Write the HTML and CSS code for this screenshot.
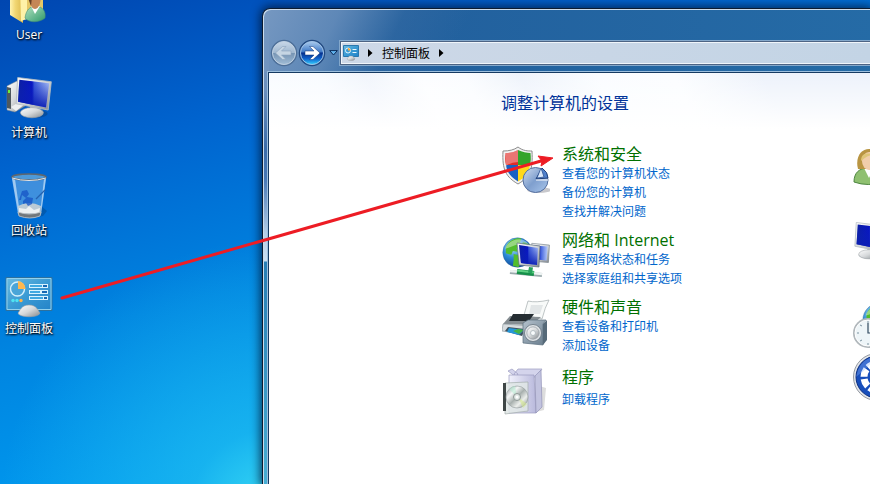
FILE: index.html
```html
<!DOCTYPE html>
<html lang="zh-CN">
<head>
<meta charset="utf-8">
<meta name="viewport" content="width=device-width, initial-scale=1">
<title>控制面板</title>
<link rel="stylesheet" href="styles.css">
</head>
<body>
<svg class="defs" width="0" height="0" aria-hidden="true">
  <defs>
    <linearGradient id="silver" x1="0" y1="0" x2="1" y2="1"><stop offset="0" stop-color="#fff"/><stop offset=".5" stop-color="#d5d8da"/><stop offset="1" stop-color="#858a8e"/></linearGradient>
    <linearGradient id="screen" x1="0" y1="0" x2="1" y2="0"><stop offset="0" stop-color="#0c1fa0"/><stop offset=".45" stop-color="#0713c4"/><stop offset=".52" stop-color="#3f5fdc"/><stop offset="1" stop-color="#b5cbfa"/></linearGradient>
    <linearGradient id="fade" x1="0" y1="0" x2="0" y2="1"><stop offset="0" stop-color="#1029b8" stop-opacity="0"/><stop offset="1" stop-color="#0a1cb4" stop-opacity=".95"/></linearGradient>
    <linearGradient id="panel" x1="0" y1="0" x2="1" y2="1"><stop offset="0" stop-color="#6cbbe0"/><stop offset=".5" stop-color="#3b9bd4"/><stop offset="1" stop-color="#2383c8"/></linearGradient>
    <linearGradient id="folder" x1="0" y1="0" x2="1" y2="0"><stop offset="0" stop-color="#fff3b0"/><stop offset=".4" stop-color="#f2d774"/><stop offset="1" stop-color="#dcb94c"/></linearGradient>
    <linearGradient id="green" x1="0" y1="0" x2="1" y2="1"><stop offset="0" stop-color="#b4e2c0"/><stop offset="1" stop-color="#2f9a6b"/></linearGradient>
    <linearGradient id="pie" x1="0" y1="0" x2="1" y2="1"><stop offset="0" stop-color="#d2def0"/><stop offset=".5" stop-color="#7f9fce"/><stop offset="1" stop-color="#a9c6ec"/></linearGradient>
    <linearGradient id="box" x1="0" y1="0" x2="1" y2="0"><stop offset="0" stop-color="#f1f1fc"/><stop offset="1" stop-color="#b9b9dc"/></linearGradient>
    <linearGradient id="speaker" x1="0" y1="0" x2="1" y2="1"><stop offset="0" stop-color="#b5c2cd"/><stop offset="1" stop-color="#667a8b"/></linearGradient>
    <linearGradient id="disc" x1="0" y1="0" x2="1" y2="1"><stop offset="0" stop-color="#8d9396"/><stop offset=".3" stop-color="#f4f6f6"/><stop offset=".5" stop-color="#a8b0ae"/><stop offset=".7" stop-color="#ecefec"/><stop offset="1" stop-color="#7a8284"/></linearGradient>
    <radialGradient id="globe" cx=".35" cy=".3" r=".75"><stop offset="0" stop-color="#b7e6fb"/><stop offset=".5" stop-color="#2c8bd6"/><stop offset="1" stop-color="#0a3f96"/></radialGradient>
    <linearGradient id="forward" x1="0" y1="0" x2="0" y2="1"><stop offset="0" stop-color="#a9cbee"/><stop offset=".45" stop-color="#3f79c6"/><stop offset=".5" stop-color="#06308c"/><stop offset=".75" stop-color="#0f63cc"/><stop offset="1" stop-color="#35d1ff"/></linearGradient>
    <linearGradient id="back" x1="0" y1="0" x2="0" y2="1"><stop offset="0" stop-color="#c9d8e8"/><stop offset=".48" stop-color="#a0b8d0"/><stop offset=".52" stop-color="#7795b4"/><stop offset="1" stop-color="#a0bcd6"/></linearGradient>
    <symbol id="control-panel" viewBox="0 0 48 48">
      <path d="M1 7.500h46v33H1z" fill="url(#panel)" stroke="#2c719f"/>
      <path d="M2 8.500h44v31H2z" fill="none" stroke="#92d1ed"/>
      <circle cx="12.500" cy="19" r="7" fill="#4aa5d8" stroke="#d5f1fc" stroke-width="1.400"/>
      <path d="M13 19v-8a8 8 0 0 1 7.500 8z" fill="#ffb84e"/>
      <path d="M24 14h19v4H24zM24 20h19v4H24zM24 26h19v4H24z" fill="#d8f3ff"/>
      <path d="M25 15h12v2H25zM25 21h10v2H25zM25 27h13v2H25z" fill="#3fa9e2"/>
      <path d="M38 15h4v2h-4zM37 21h5v2h-5zM39 27h3v2h-3z" fill="#1668b4"/>
      <circle cx="8" cy="30.500" r="1.700" fill="#4fe4f2"/><circle cx="12" cy="30.500" r="1.700" fill="#4fe4f2"/><circle cx="16" cy="30.500" r="1.700" fill="#ffb347"/>
      <path d="M13 43c2-2 3-8 11-8s9 6 11 8c-1 5-21 5-22 0z" fill="url(#silver)" stroke="#9a9fa3" stroke-width=".6"/>
    </symbol>
    <symbol id="monitor" viewBox="0 0 34 40">
      <ellipse cx="17" cy="35" rx="13" ry="4" fill="#123" opacity=".25"/>
      <path d="M14 26l7 1-1 6h-8z" fill="#aeb4b8"/>
      <ellipse cx="15" cy="34" rx="11" ry="4.800" fill="url(#silver)" stroke="#a3a8ac" stroke-width=".6"/>
      <path d="M1.500.500l32 4-3 27-30.500-6z" fill="url(#silver)" stroke="#b4bcc2" stroke-width=".8"/>
      <path d="M3 2.500l28.500 3.500-3 23-26.700-5.500z" fill="url(#screen)"/><path d="M3 2.500l28.500 3.500-3 23-26.700-5.500z" fill="url(#fade)"/>
    </symbol>
    <symbol id="earth" viewBox="0 0 40 40">
      <circle cx="20" cy="20" r="19" fill="url(#globe)" stroke="#2b6799" stroke-width=".5"/>
      <path d="M5 13C10 3 18 1 25 2l-2 5 4 3-8 4 1 5-6-1-2 5-7-2zM15 22l9 2 4 6-7 9-7-2 1-7z" fill="#52bd2d"/>
      <path d="M27 6l8 3 3 8-8 3-5-7z" fill="#2fa43a"/>
      <path d="M4 15C8 3 27-2 34 9 22 6 14 13 4 15z" fill="#fff" opacity=".4"/>
    </symbol>
  </defs>
</svg>

<ul class="desktop">
  <li><a class="shortcut" href="#user">
    <svg viewBox="0 0 48 48" aria-hidden="true"><path d="M18 4l20-2v38l-18 3z" fill="#e6c766"/><path d="M5 1l13 5v41L5 39z" fill="url(#folder)"/><path d="M15 8l7-1v36l-6 2z" fill="#fff1a8"/><path d="M20 42c1-8 5-12 11-12 7 1 10 5 9 12-6 5-16 5-20 0z" fill="url(#green)" stroke="#458e73" stroke-width=".6"/><path d="M26 30l4 8 5-8z" fill="#fff"/><path d="M24 19c0-8 12-8 12 0 0 7-2 14-6 14s-6-7-6-14z" fill="#c48656"/><path d="M23 22c-1-8 4-11 9-9l-5 8-1 9z" fill="#684126"/></svg>
    <span>User</span></a></li>
  <li><a class="shortcut" href="#computer">
    <svg viewBox="0 0 48 48" aria-hidden="true"><path d="M2 12l10-5 8 2v23l-10 6-8-2z" fill="url(#silver)" stroke="#80868c" stroke-width=".5"/><path d="M2 13l4 1v21l-4-1z" fill="#4e585e"/><path d="M3 16h2v3H3z" fill="#69f03c"/><path d="M6 33l8-5 6 2-9 7z" fill="#eef0f1"/><use href="#monitor" x="11" y="3" width="36" height="42"/></svg>
    <span>计算机</span></a></li>
  <li><a class="shortcut" href="#recycle">
    <svg viewBox="0 0 48 48" aria-hidden="true"><path d="M36 34l6 5-4 5-6 1z" fill="#024" opacity=".25"/><path d="M7 5h34l-5 38q-12 5-22 0z" fill="#9ccbf0" opacity=".4"/><path d="M10 7l5 35h-2L7 7zM39 7l-4 35h1l5-35z" fill="#e2f2ff" opacity=".6"/><path d="M13 34q11-6 23 0l-1 8H14z" fill="#c9d0d4" opacity=".9"/><path d="M14 36l7 1 3-3 5 4 6-2-1 5H14z" fill="#edf0f1"/><path d="M13 40q11 4 23 0l-1 4q-10 4-21 0z" fill="#72777b" stroke="#c5c9cc" stroke-width=".8"/><path d="M17 19l5-1 2 4-3 4-4-3-1 5h-2zM18 29l4-4 6 1-1 6-4 2-2-3-3 1z" fill="#1553c4" opacity=".75"/><path d="M31 27l9-9" stroke="#2462b0" stroke-width="1.200"/><ellipse cx="24" cy="5" rx="17" ry="3" fill="#4f9ad8" stroke="#5f666d" stroke-width="1.600"/><path d="M7 6q17 5 34 0" fill="none" stroke="#e3e7ea"/></svg>
    <span>回收站</span></a></li>
  <li><a class="shortcut" href="#panel">
    <svg viewBox="0 0 48 48" aria-hidden="true"><use href="#control-panel" width="48" height="48"/></svg>
    <span>控制面板</span></a></li>
</ul>

<section class="window" aria-label="控制面板">
  <header class="toolbar">
    <div class="history">
      <button type="button" aria-label="后退"><svg viewBox="0 0 28 28"><circle cx="14" cy="14" r="12.500" fill="none" stroke="#4d6f98" stroke-width="1.500"/><circle cx="14" cy="14" r="11.500" fill="url(#back)" stroke="#c0d0e0"/><path d="M5.500 14l7-6.500H16L11.500 12H21v4h-9.500l4.500 4.500h-3.500z" fill="#c6d5e3" stroke="#8ba3bc" stroke-width=".6"/></svg></button>
      <button type="button" aria-label="前进"><svg viewBox="0 0 28 28"><circle cx="14" cy="14" r="12.500" fill="none" stroke="#234a81" stroke-width="1.500"/><circle cx="14" cy="14" r="11.500" fill="url(#forward)" stroke="#9fc2e6"/><path d="M22 14l-7 6.500h-3.500L16 16H7v-4h9l-4.500-4.500H15z" fill="#fff" stroke="#0d3479" stroke-width=".5"/></svg></button>
      <button class="recent" type="button" aria-label="最近的页面"><svg viewBox="0 0 9 6"><path d="M.7.600h7.600L4.500 5z" fill="#61b4ef" stroke="#0b2a59"/></svg></button>
    </div>
    <nav class="address" aria-label="地址">
      <svg class="place" viewBox="0 0 16 16" aria-hidden="true"><path d="M.5.500h15v11H.5z" fill="url(#panel)" stroke="#2a78ae"/><circle cx="5" cy="5.500" r="2.500" fill="#3b9bd4" stroke="#e2f5fd"/><path d="M5 5.500V3a2.500 2.500 0 0 1 2.500 2.500z" fill="#ffab3a"/><path d="M9.500 4.500h4M9.500 7.500h4" stroke="#e8f8ff" stroke-width="1.200"/><path d="M4 14c1-1 1-3 4-3s3 2 4 3c-1 2-7 2-8 0z" fill="url(#silver)" stroke="#8f969c" stroke-width=".4"/></svg>
      <svg class="caret" viewBox="0 0 5 8" aria-hidden="true"><path d="M0 0l4.500 4L0 8z"/></svg>
      <a href="#panel">控制面板</a>
      <svg class="caret" viewBox="0 0 5 8" aria-hidden="true"><path d="M0 0l4.500 4L0 8z"/></svg>
    </nav>
  </header>
  <main class="pane">
    <h1>调整计算机的设置</h1>
    <div class="columns">
      <div class="categories">
        <section class="category">
          <svg viewBox="0 0 48 48" aria-hidden="true"><ellipse cx="37" cy="45" rx="12" ry="3" fill="#223" opacity=".25"/><path d="M16 2c5 4 10 4 14 4 1 19-2 26-14 33C4 32 0 25 1 6c6 0 11-1 15-4z" fill="#f2f2f2" stroke="#8c8c8c"/><path d="M16 5v15H4C3 17 3 13 3.500 8c5 0 9-1 12.500-3z" fill="#e12d28"/><path d="M16 5c4 2 9 3 12.500 3 .5 5 .5 8-.5 12H16z" fill="#34a42b"/><path d="M4 20h12v16.500C9 32 5 28 4 20z" fill="#1760c4"/><path d="M16 20h12c-1 8-4 12-12 16.500z" fill="#ffd91b"/><path d="M3.500 8c5 0 9-1 12.500-3v12Q9 17 4 21z" fill="#fff" opacity=".35"/><circle cx="33.500" cy="35" r="12.500" fill="url(#pie)" stroke="#546f9f"/><path d="M34 34l6-11q6 4 6 10z" fill="#4f80cb" stroke="#203f78"/><path d="M35 33l4-10 3 9z" fill="#d9e8fb" stroke="#274a8b" stroke-width=".7"/><path d="M34 35h12" stroke="#fff" stroke-width="1.200"/></svg>
          <div><h2><a href="#security">系统和安全</a></h2><a href="#status">查看您的计算机状态</a><a href="#backup">备份您的计算机</a><a href="#fix">查找并解决问题</a></div>
        </section>
        <section class="category">
          <svg viewBox="0 0 48 48" aria-hidden="true"><use href="#earth" x="0" y="6" width="31" height="31"/><g transform="translate(29 12) scale(.52 .6)"><path d="M1.500.500l34 3-2 29-30-2z" fill="url(#silver)" stroke="#62717c"/><path d="M4 4l28 2-2 23-24-2z" fill="url(#screen)"/></g><path d="M15 12l23 3-1 21-20-2z" fill="url(#silver)" stroke="#62717c" stroke-width=".7"/><path d="M17 14l19 3-1 17-16-2z" fill="url(#screen)"/><path d="M17 14l19 3-1 17-16-2z" fill="url(#fade)"/><path d="M8 41l32 3" stroke="#9ba9ac" stroke-width="4"/><path d="M8 40l32 3" stroke="#edf3f2" stroke-width="2.500"/><path d="M15 40.500l17 2" stroke="#16904a" stroke-width="5"/><path d="M15 39.500l17 2" stroke="#5ed083" stroke-width="2"/><path d="M27 36l4 .5-1 6-4-1z" fill="#27a15c"/></svg>
          <div><h2><a href="#network">网络和 Internet</a></h2><a href="#tasks">查看网络状态和任务</a><a href="#homegroup">选择家庭组和共享选项</a></div>
        </section>
        <section class="category">
          <svg viewBox="0 0 48 48" aria-hidden="true"><path d="M22 17L26 3q8 2 21-1-4 7-7 19z" fill="#f8faf9" stroke="#a4acad" stroke-width=".7"/><path d="M29 7h12l-3 9H27z" fill="#e2e6e7"/><path d="M8 18l31 1-9 8-29-1z" fill="#858d92"/><path d="M11 16h21l-5 7H7z" fill="#252d32"/><path d="M1 26l29 2-2 9L0 33z" fill="#d7dcdf" stroke="#8f9ba1" stroke-width=".7"/><path d="M6 29l17 2-3 7-17-5z" fill="#41535f"/><path d="M7 30l15 2-5 5-12-3z" fill="#2697d8"/><path d="M11 33l5-2 6 1-5 4z" fill="#45b445"/><path d="M21 25l5-3h18l-3 4v21l-20-2z" fill="url(#speaker)" stroke="#596d7d" stroke-width=".7"/><path d="M41 26l4-4v20l-4 5z" fill="#566a79"/><circle cx="31" cy="35" r="8.500" fill="#e1e5e8" stroke="#63717c" stroke-width=".8"/><circle cx="31" cy="35" r="6.200" fill="url(#silver)" stroke="#909aa1" stroke-width=".7"/><circle cx="31" cy="35" r="2.500" fill="#f8fbfc" stroke="#a1acb2" stroke-width=".7"/></svg>
          <div><h2><a href="#hardware">硬件和声音</a></h2><a href="#printers">查看设备和打印机</a><a href="#add">添加设备</a></div>
        </section>
        <section class="category single">
          <svg viewBox="0 0 48 48" aria-hidden="true"><path d="M34 17l10 3-2 22-12 3z" fill="#555" opacity=".2"/><path d="M6 3l4-2 6 5-2 3zM12 6l4-5h24l-6 8H14z" fill="#d4d4ec" stroke="#9c9cc0" stroke-width=".7"/><path d="M7 7h25l2 38H7z" fill="url(#box)" stroke="#9c9cc0" stroke-width=".7"/><path d="M33 8l6-6 1 37-6 6z" fill="#c2c3df" stroke="#9292b8" stroke-width=".7"/><path d="M3 15l23-1v29L3 46z" fill="#dfe6e5" fill-opacity=".85" stroke="#a4adac" stroke-width=".7"/><path d="M1 15h3v28H1z" fill="#3f4646"/><circle cx="15" cy="29" r="11" fill="url(#disc)" stroke="#90999a" stroke-width=".6"/><path d="M15 29L7 21q3-3 6-3z" fill="#b6f0d3" opacity=".5"/><path d="M16 29l9 7-4 4z" fill="#d5e991" opacity=".6"/><circle cx="15" cy="29" r="3.500" fill="#dce3e1" stroke="#8e9795"/><circle cx="15" cy="29" r="1.500" fill="#fff"/></svg>
          <div><h2><a href="#programs">程序</a></h2><a href="#uninstall">卸载程序</a></div>
        </section>
      </div>
      <div class="more">
        <a href="#accounts" aria-label="用户帐户"><svg viewBox="0 0 48 48"><path d="M1 37c0-9 5-14 14-14s15 5 15 14q-15 5-29 0z" fill="#8fc070" stroke="#4d8540"/><path d="M11 23l5 10 5-10z" fill="#fff"/><path d="M5 24C2 12 8 4 16 4s13 7 10 20z" fill="#b99542"/><ellipse cx="16" cy="16" rx="7" ry="9" fill="#f1ceab"/><path d="M8 16c0-8 6-9 14-6-6 0-9 2-14 6z" fill="#dfc578"/></svg></a>
        <a href="#appearance" aria-label="外观"><svg viewBox="0 0 48 48"><use href="#monitor" x="1" y="1" width="34" height="38"/></svg></a>
        <a href="#clock" aria-label="时钟"><svg viewBox="0 0 48 48"><use href="#earth" x="9" y="1" width="36" height="36"/><circle cx="15" cy="32" r="15" fill="#b0b7bb"/><circle cx="15" cy="32" r="13" fill="#eef5f8" stroke="#fff"/><path d="M15 22v10h7" fill="none" stroke="#334b60" stroke-width="1.200"/><path d="M15 20v2M15 42v2M4 32h2M7 24l2 1M7 40l2-1" stroke="#7b929f"/></svg></a>
        <a href="#ease" aria-label="轻松访问"><svg viewBox="0 0 48 48"><circle cx="24" cy="24" r="23.500" fill="#e4e7eb" stroke="#9499a1"/><circle cx="24" cy="24" r="21" fill="#174ebb" stroke="#0a2d80"/><circle cx="24" cy="24" r="13" fill="none" stroke="#fff" stroke-width="7" stroke-dasharray="8 2.210"/><path d="M3 24q3-18 20-21-6 11-20 21z" fill="#8db8ff" opacity=".35"/></svg></a>
      </div>
    </div>
  </main>
</section>

<svg class="pointer" width="500" height="160" viewBox="0 0 500 160" aria-hidden="true"><path d="M7 150L486 13" stroke="#ed1c24" stroke-width="3" stroke-linecap="round"/><path d="M483 8l15 2-12 8 1-5z" fill="#ed1c24" stroke="#ed1c24"/></svg>
</body>
</html>
```

FILE: styles.css
```css
* { box-sizing: border-box; }
body {
  position: relative;
  min-height: 100vh;
  margin: 0;
  overflow: hidden;
  color: #000;
  font: 12px/19px "Open Sans", "Noto Sans CJK SC", sans-serif;
  background:
    radial-gradient(circle at 270px 510px, #38d8f4 0, rgba(32, 190, 240, .7) 80px, rgba(16, 165, 235, 0) 270px),
    linear-gradient(165deg, #0046b0 0, #0064cf 170px, #0084e0 340px, #0098ee 500px, #0aa4f0 100%);
}
a { color: inherit; text-decoration: none; }
svg { display: block; }
button { padding: 0; border: 0; background: none; }
h1, h2 { margin: 0; font-size: 16px; font-weight: 400; }
.defs { position: absolute; }

.desktop {
  display: flex;
  flex-direction: column;
  gap: 30px;
  width: 58px;
  margin: -24px 0 0;
  padding: 0;
  list-style: none;
}
.shortcut {
  display: flex;
  flex-direction: column;
  align-items: center;
  gap: 2px;
  color: #fff;
  line-height: 18px;
  text-shadow: 1px 1px 2px #000, 0 1px 2px #001a3c;
  white-space: nowrap;
}
.shortcut svg { width: 48px; height: 48px; }

.window {
  position: absolute;
  inset: 8px 0 0 262px;
  display: flex;
  flex-direction: column;
  padding-left: 5px;
  overflow: hidden;
  border: solid #0c1c30;
  border-width: 1px 0 0 1px;
  border-radius: 8px 0 0 0;
  box-shadow: inset 1px 1px 0 #cbdcec, 0 0 10px 2px rgba(0, 20, 50, .75);
  background:
    linear-gradient(115deg, #7698c1 0, rgba(105, 143, 188, .85) 70px, rgba(60, 110, 165, .4) 130px, rgba(36, 100, 160, 0) 190px) 0 0 / 100% 63px no-repeat,
    linear-gradient(90deg, #215d9b, #256ba6) 6px 0 / 100% 63px no-repeat,
    linear-gradient(#7597c0 0, #6b90be 80px, #3a6caa 140px, #4778b6 170px, #b5cee7 225px, #cbdff2 252px, #277eb5 253px, #48aed3 100%);
}
.toolbar { display: flex; align-items: center; padding: 30px 0 5px; }
.history { display: flex; align-items: center; width: 73px; padding-left: 2px; }
.history svg { width: 28px; height: 28px; }
.history .recent { padding-left: 3px; }
.history .recent svg { width: 9px; height: 6px; }
.address {
  display: flex;
  flex: 1;
  align-items: center;
  gap: 9px;
  height: 22px;
  padding: 0 1px;
  border: solid #f0f5fa;
  border-width: 1px 0 1px 1px;
  box-shadow: 0 0 0 1px #4d6484, 0 0 0 2px #84a8cb;
  background: linear-gradient(90deg, #cdd8e7, #c3d4e5);
}
.place { width: 16px; height: 16px; }
.caret { width: 5px; height: 8px; }

.pane {
  flex: 1;
  padding: 20px 0 0 233px;
  overflow: hidden;
  border: solid #153a62;
  border-width: 1px 0 0 1px;
  box-shadow: 0 0 0 1px #9dbfdd;
  background:
    linear-gradient(rgba(255, 255, 255, 0), #fff 56px),
    linear-gradient(65deg, #edf3fb 0, #fafcff 130px, #f8fbff 220px, #f1f5fc 260px, #fcfdff 310px, #fafcff 350px, #eef3fb 400px, #fafcff 470px, #fbfdff 540px, #edf2fb 620px);
}
h1 { margin-left: -1px; color: #003399; line-height: 21px; }
.columns { display: grid; grid-template-columns: 351px 1fr; margin-top: 31px; }
.categories { display: flex; flex-direction: column; gap: 10px; }
.category { display: flex; gap: 12px; color: #0066cc; }
.category svg, .more svg { width: 48px; height: 48px; }
.category a { display: block; width: max-content; }
h2 { color: #007000; line-height: 19px; }
.single { padding-top: 3px; }
.single h2 { padding-bottom: 3px; }
.more { display: grid; grid-template-rows: 76px 80px 52px 48px; min-width: 0; overflow: hidden; }

.pointer { position: absolute; top: 148px; left: 55px; pointer-events: none; }
```
